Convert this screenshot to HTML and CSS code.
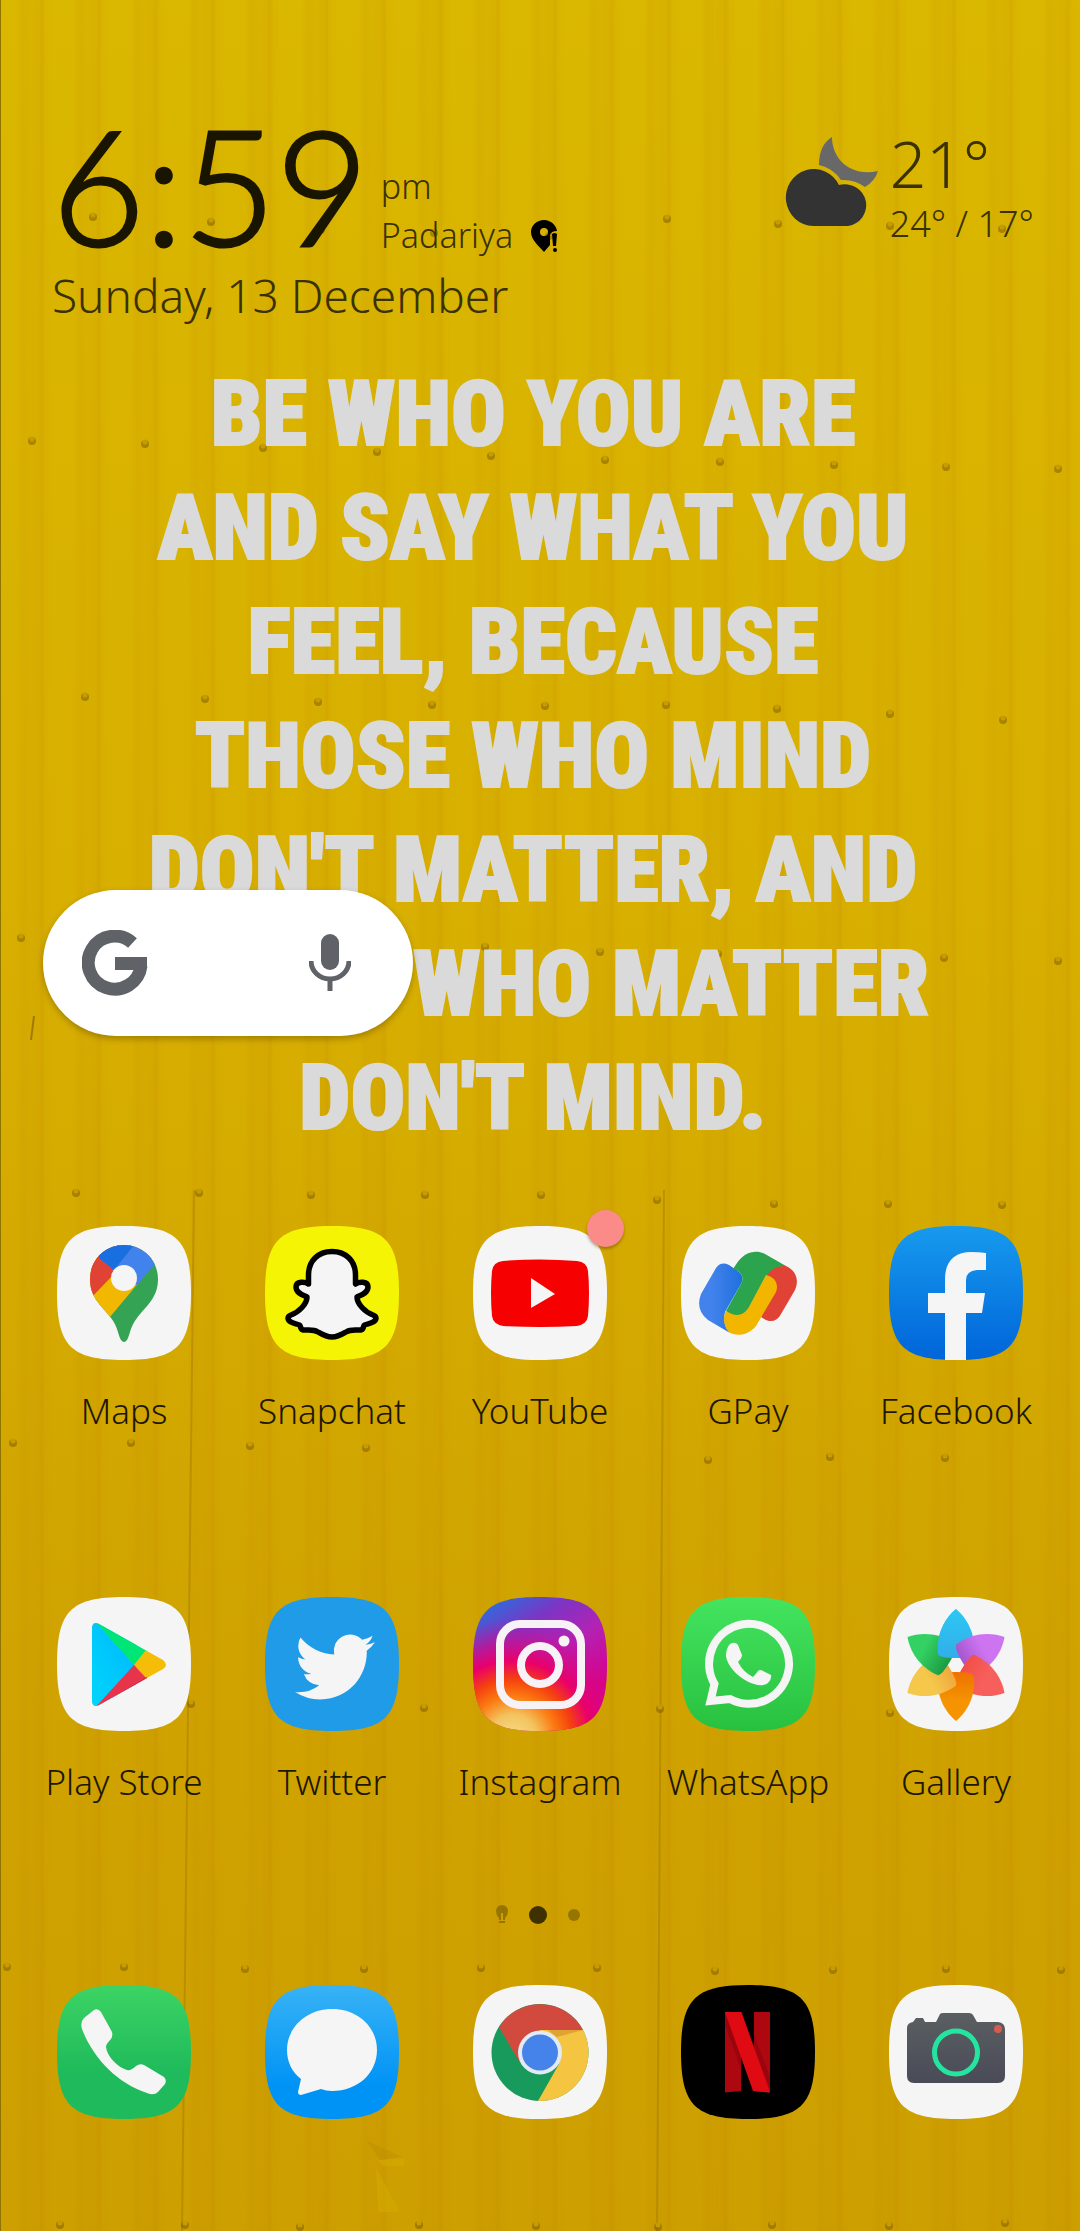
FILE: index.html
```
<!DOCTYPE html>
<html lang="en">
<head>
<meta charset="utf-8">
<meta name="viewport" content="width=device-width">
<title>Home</title>
<link rel="stylesheet" href="styles.css">
</head>
<body>
<svg class="wallpaper" viewBox="0 0 1080 2231" preserveAspectRatio="xMidYMid slice" aria-hidden="true">
  <defs>
    <linearGradient id="paint" x1="0" y1="0" x2="0" y2="1">
      <stop offset="0" stop-color="#dab700"/><stop offset=".4" stop-color="#d8b000"/><stop offset=".75" stop-color="#d0a300"/><stop offset="1" stop-color="#cd9f00"/>
    </linearGradient>
    <linearGradient id="rib">
      <stop offset="0" stop-color="#b87800" stop-opacity=".04"/><stop offset=".15" stop-color="#b87800" stop-opacity="0"/><stop offset=".5" stop-color="#b87800" stop-opacity="0"/><stop offset=".62" stop-color="#b87800" stop-opacity=".1"/><stop offset=".75" stop-color="#b87800" stop-opacity=".05"/><stop offset=".88" stop-color="#b87800" stop-opacity=".08"/><stop offset=".95" stop-color="#b47000" stop-opacity=".16"/><stop offset="1" stop-color="#b87800" stop-opacity=".04"/>
    </linearGradient>
    <pattern id="ribs" width="57" height="2231" patternUnits="userSpaceOnUse" x="-12"><rect width="57" height="2231" fill="url(#rib)"/></pattern>
    <g id="rivet"><circle r="4" fill="#7a5800" opacity=".5"/><circle cy="-2" r="2.500" fill="#c79c00"/></g>
  </defs>
  <rect width="1080" height="2231" fill="url(#paint)"/>
  <rect width="1080" height="2231" fill="url(#ribs)"/>
  <path d="M0 0V2231" stroke="#8f7500" stroke-width="2"/>
  <path d="M194 1190L182 2231M664 1190L657 2231" stroke="#8a6200" stroke-width="2" opacity=".3" fill="none"/>
  <path d="M31 1040L34 1016" stroke="#6a4c00" stroke-width="2" opacity=".5"/>
  <path d="M366 2140L402 2157L380 2160Z" fill="#b98c00" opacity=".4"/><path d="M378 2160L405 2158L404 2166L382 2166ZM376 2168L400 2212L378 2212Z" fill="#d6ac00" opacity=".5"/>
  <use href="#rivet" x="93" y="217"/><use href="#rivet" x="211" y="222"/><use href="#rivet" x="321" y="230"/><use href="#rivet" x="434" y="233"/><use href="#rivet" x="549" y="236"/><use href="#rivet" x="667" y="219"/><use href="#rivet" x="778" y="224"/><use href="#rivet" x="890" y="226"/><use href="#rivet" x="1002" y="229"/>
  <use href="#rivet" x="32" y="441"/><use href="#rivet" x="145" y="444"/><use href="#rivet" x="263" y="448"/><use href="#rivet" x="377" y="452"/><use href="#rivet" x="491" y="456"/><use href="#rivet" x="605" y="460"/><use href="#rivet" x="720" y="462"/><use href="#rivet" x="834" y="465"/><use href="#rivet" x="946" y="467"/><use href="#rivet" x="1058" y="469"/>
  <use href="#rivet" x="85" y="697"/><use href="#rivet" x="205" y="699"/><use href="#rivet" x="318" y="702"/><use href="#rivet" x="432" y="705"/><use href="#rivet" x="545" y="706"/><use href="#rivet" x="666" y="705"/><use href="#rivet" x="777" y="709"/><use href="#rivet" x="890" y="714"/><use href="#rivet" x="1003" y="720"/>
  <use href="#rivet" x="21" y="938"/><use href="#rivet" x="485" y="947"/><use href="#rivet" x="600" y="952"/><use href="#rivet" x="718" y="954"/><use href="#rivet" x="944" y="958"/><use href="#rivet" x="1058" y="961"/>
  <use href="#rivet" x="76" y="1193"/><use href="#rivet" x="199" y="1193"/><use href="#rivet" x="311" y="1195"/><use href="#rivet" x="425" y="1195"/><use href="#rivet" x="541" y="1195"/><use href="#rivet" x="657" y="1200"/><use href="#rivet" x="774" y="1204"/><use href="#rivet" x="888" y="1204"/><use href="#rivet" x="1002" y="1205"/>
  <use href="#rivet" x="13" y="1443"/><use href="#rivet" x="131" y="1443"/><use href="#rivet" x="250" y="1446"/><use href="#rivet" x="366" y="1448"/><use href="#rivet" x="708" y="1460"/><use href="#rivet" x="830" y="1457"/><use href="#rivet" x="945" y="1458"/>
  <use href="#rivet" x="191" y="1704"/><use href="#rivet" x="424" y="1708"/><use href="#rivet" x="660" y="1709"/><use href="#rivet" x="890" y="1713"/>
  <use href="#rivet" x="7" y="1967"/><use href="#rivet" x="124" y="1967"/><use href="#rivet" x="245" y="1969"/><use href="#rivet" x="364" y="1969"/><use href="#rivet" x="481" y="1968"/><use href="#rivet" x="597" y="1968"/><use href="#rivet" x="715" y="1971"/><use href="#rivet" x="833" y="1970"/><use href="#rivet" x="946" y="1969"/><use href="#rivet" x="1061" y="1970"/>
  <use href="#rivet" x="60" y="2225"/><use href="#rivet" x="185" y="2225"/><use href="#rivet" x="300" y="2227"/><use href="#rivet" x="419" y="2225"/><use href="#rivet" x="536" y="2226"/><use href="#rivet" x="658" y="2227"/><use href="#rivet" x="772" y="2225"/><use href="#rivet" x="889" y="2226"/><use href="#rivet" x="1005" y="2223"/>
</svg>
<svg class="defs" aria-hidden="true">
  <defs>
    <path id="tile" d="M67 0C120 0 134 14 134 67S120 134 67 134 0 120 0 67 14 0 67 0Z"/>
  </defs>
</svg>

<main class="home">
  <header class="status">
    <section class="when">
      <div class="when-top">
        <time class="clock">6:59</time>
        <div class="place">
          <span>pm</span>
          <span class="town">Padariya
            <svg class="pin" viewBox="0 0 26 32" aria-hidden="true"><path fill-rule="evenodd" d="M13 0C6 0 0 5 0 12C0 20 8 26 13 32L19 25V15Q20 11 26 11C25 5 20 0 13 0ZM13 8A4 4 0 1 1 13 16A4 4 0 1 1 13 8Z"/><path d="M21 14Q24 12 26 14L25 26H22Z"/><circle cx="24" cy="30" r="2"/></svg>
          </span>
        </div>
      </div>
      <p class="date">Sunday, 13 December</p>
    </section>
    <section class="weather">
      <svg class="sky" viewBox="0 0 93 89" aria-hidden="true"><path fill="#686868" d="M47 0C47 22 65 40 93 34Q90 44 80 50Q69 42 56 43Q48 31 34 28Q34 8 47 0Z"/><path fill="#333" d="M28 89A28 28.500 0 1 1 54 48A21.500 21 0 1 1 63 89Z"/></svg>
      <div class="temps"><span class="now">21°</span><span>24° / 17°</span></div>
    </section>
  </header>

  <section class="stage">
    <p class="quote">BE WHO YOU ARE<br>AND SAY WHAT YOU<br>FEEL, BECAUSE<br>THOSE WHO MIND<br>DON'T MATTER, AND<br>THOSE WHO MATTER<br>DON'T MIND.</p>
    <div class="search">
      <button aria-label="Search"><svg class="g" viewBox="-33 -33 66 66"><path d="M17.500 -20A26.500 26.500 0 1 0 26 3" fill="none" stroke="currentColor" stroke-width="13"/><path d="M0 -6H32V4L28 7H0Z" fill="currentColor"/></svg></button>
      <button aria-label="Voice search"><svg class="mic" viewBox="0 0 42 58"><rect x="12" width="18" height="36" rx="9" fill="currentColor"/><path d="M2 27A19 18 0 0 0 40 27M21 44V57" fill="none" stroke="currentColor" stroke-width="5"/></svg></button>
    </div>
  </section>

  <nav class="apps" aria-label="Apps">
    <a class="app" href="#maps">
      <svg viewBox="0 0 134 134"><use href="#tile" fill="#f5f5f5"/><clipPath id="mp"><path d="M67 19C48 19 33 34 33 53C33 72 45 80 54 92C61 101 61 109 64 114Q67 118 70 114C73 109 73 101 80 92C89 80 101 72 101 53C101 34 86 19 67 19Z"/></clipPath><g clip-path="url(#mp)"><rect width="134" height="134" fill="#34a353"/><path d="M98 37L53 91L30 75V10H98Z" fill="#f2b700"/><path d="M57 48L34 72H20V10H60Z" fill="#e04335"/><path d="M42 32L57 44L80 59L104 31L80 10H50Z" fill="#4282ec"/><path d="M42 32L57 44L78 18L67 10H40Z" fill="#1a6fe0"/></g><circle cx="67" cy="52" r="13" fill="#f5f5f5"/></svg>
      <span>Maps</span></a>
    <a class="app" href="#snapchat">
      <svg viewBox="0 0 134 134"><use href="#tile" fill="#f5f405"/><path d="M67 25.500C53 25.500 43.500 35 43.500 49V58C40 55.500 31 55 31 61C31 67 38 69 42 71C42 78 34 86 26 89C22 90.500 22 94 26 96C29 98 33 98 34.500 99C36 100 35 103 38 104C43 104.500 48 103 53 106C58 109 61 111 67 111C73 111 76 109 81 106C86 103 91 104.500 96 104C99 103 98 100 99.500 99C101 98 105 98 108 96C112 94 112 90.500 108 89C100 86 92 78 92 71C96 69 103 67 103 61C103 55 94 55.500 90.500 58V49C90.500 35 81 25.500 67 25.500Z" fill="#f5f5f5" stroke="#000" stroke-width="5.500" stroke-linejoin="round"/></svg>
      <span>Snapchat</span></a>
    <a class="app" href="#youtube">
      <svg viewBox="0 0 134 134"><use href="#tile" fill="#f5f5f5"/><path d="M30 35Q67 32 104 35Q114 36 115 45Q117 67 115 90Q114 98 104 100Q67 102 30 100Q20 98 19 90Q17 67 19 45Q20 36 30 35Z" fill="#f60002"/><path d="M58 52L82 68L58 82Z" fill="#f5f5f5"/></svg>
      <i class="badge"></i><span>YouTube</span></a>
    <a class="app" href="#gpay">
      <svg viewBox="0 0 134 134"><use href="#tile" fill="#f5f5f5"/><linearGradient id="gb"><stop offset=".3" stop-color="#4282ec"/><stop offset="1" stop-color="#1e70dd"/></linearGradient><path d="M105 40C116 45 118 55 114 64L100 88Q96 96 88 95Q84 94 80 91L93 62L85 49C90 41 98 39 105 40Z" fill="#e04335"/><path d="M35 42Q40 35 48 39L57 45Q64 50 60 58L44 86C42 95 44 102 49 107L27 94Q14 84 20 68Z" fill="url(#gb)"/><path d="M52 43L56 37C63 26 75 23 84 28L105 40C96 40 90 43 85 50L68 82Q62 92 52 90L45 85L60 58Q64 50 57 45Z" fill="#2ca44e"/><path d="M85 49C94 51 98 58 95 66L75 100C66 111 54 110 48 106C42 100 42 90 45 85C56 92 63 89 68 81Z" fill="#f3b600"/></svg>
      <span>GPay</span></a>
    <a class="app" href="#facebook">
      <svg viewBox="0 0 134 134"><linearGradient id="fb" x2="0" y2="1"><stop stop-color="#179aee"/><stop offset="1" stop-color="#0065d9"/></linearGradient><use href="#tile" fill="url(#fb)"/><path d="M56 134V87H39V67H56V53C56 35 66 26 82 26Q90 26 97 27V44H88Q77 45 77 54V67H96L93 87H77V134Z" fill="#f5f5f5"/></svg>
      <span>Facebook</span></a>
    <a class="app" href="#play">
      <svg viewBox="0 0 134 134"><linearGradient id="pb" x1="1" x2="0" y2="1"><stop stop-color="#00b5ff"/><stop offset="1" stop-color="#00d9fa"/></linearGradient><use href="#tile" fill="#f5f5f5"/><clipPath id="pp"><path d="M35 30Q36 24 42 27L106 63Q112 68 106 72L42 108Q36 111 35 105Z"/></clipPath><g clip-path="url(#pp)"><rect x="30" y="20" width="50" height="95" fill="url(#pb)"/><path d="M36 22L77 68L94 50L50 20Z" fill="#00e676"/><path d="M77 68L89 53L115 60V76L89 82Z" fill="#f6bd08"/><path d="M36 113L77 68L90 82L45 115Z" fill="#e8344a"/><path d="M38 111L90 80V84L42 112Z" fill="#b82b48"/></g></svg>
      <span>Play Store</span></a>
    <a class="app" href="#twitter">
      <svg viewBox="0 0 134 134"><use href="#tile" fill="#1f9be8"/><path transform="translate(30 30) scale(3.330)" d="M23.953 4.570a10 10 0 01-2.825.775 4.958 4.958 0 002.163-2.723c-.951.555-2.005.959-3.127 1.184a4.920 4.920 0 00-8.384 4.482C7.690 8.095 4.067 6.130 1.640 3.162a4.822 4.822 0 00-.666 2.475c0 1.710.870 3.213 2.188 4.096a4.904 4.904 0 01-2.228-.616v.060a4.923 4.923 0 003.946 4.827 4.996 4.996 0 01-2.212.085 4.936 4.936 0 004.604 3.417 9.867 9.867 0 01-6.102 2.105c-.390 0-.779-.023-1.170-.067a13.995 13.995 0 007.557 2.209c9.053 0 13.998-7.496 13.998-13.985 0-.210 0-.420-.015-.630A9.935 9.935 0 0024 4.590z" fill="#f5f5f5"/></svg>
      <span>Twitter</span></a>
    <a class="app" href="#instagram">
      <svg viewBox="0 0 134 134"><linearGradient id="ia" x1=".2" y1="0" x2=".7" y2=".8"><stop stop-color="#2f6bdc"/><stop offset=".3" stop-color="#7d34c4"/><stop offset=".6" stop-color="#b322b4"/><stop offset="1" stop-color="#d8008c"/></linearGradient><radialGradient id="ib" gradientUnits="userSpaceOnUse" cx="40" cy="142" r="120"><stop stop-color="#f6df88"/><stop offset=".2" stop-color="#f3c460"/><stop offset=".36" stop-color="#fb7a10"/><stop offset=".5" stop-color="#f5400f"/><stop offset=".65" stop-color="#e9006a"/><stop offset="1" stop-color="#c8109a" stop-opacity="0"/></radialGradient><use href="#tile" fill="url(#ia)"/><use href="#tile" fill="url(#ib)"/><g fill="none" stroke="#f7f2f6" stroke-width="8"><rect x="27" y="27" width="81" height="81" rx="20"/><circle cx="67" cy="68" r="19"/></g><circle cx="91" cy="44" r="5.500" fill="#f7f2f6"/></svg>
      <span>Instagram</span></a>
    <a class="app" href="#whatsapp">
      <svg viewBox="0 0 134 134"><linearGradient id="wa" x2="0" y2="1"><stop stop-color="#44e45f"/><stop offset="1" stop-color="#28c13f"/></linearGradient><use href="#tile" fill="url(#wa)"/><path d="M29.500 104L33.500 87A40 40 0 1 1 49 102Z" fill="none" stroke="#f5f5f5" stroke-width="8"/><path d="M49 47Q54 44 57 48L61 58Q61 61 57 65Q62 75 72 80Q75 77 77 74Q79 72 82 74L90 78Q91 82 87 86Q82 90 73 87C57 82 46 68 45 59Q45 51 49 47Z" fill="#f5f5f5"/></svg>
      <span>WhatsApp</span></a>
    <a class="app" href="#gallery">
      <svg viewBox="0 0 134 134"><defs><path id="petal" d="M67 12C56 21 47 37 49 57Q50 61 67 61Q84 61 85 57C87 37 78 21 67 12Z"/><clipPath id="lh"><path d="M0 0H67V67H0Z"/></clipPath><linearGradient id="p1" x2="0" y2="1"><stop stop-color="#2cc8f3"/><stop offset="1" stop-color="#32aee8"/></linearGradient><linearGradient id="p2" x2="0" y2="1"><stop offset=".5" stop-color="#cd74f0"/><stop offset="1" stop-color="#a456cf"/></linearGradient><linearGradient id="p3" x2="0" y2="1"><stop offset=".5" stop-color="#f65f5c"/><stop offset="1" stop-color="#f24e48"/></linearGradient><linearGradient id="p4" x2="0" y2="1"><stop offset=".4" stop-color="#f59400"/><stop offset="1" stop-color="#ef7100"/></linearGradient><linearGradient id="p5" x2="0" y2="1"><stop offset=".5" stop-color="#f5c84c"/><stop offset="1" stop-color="#f0a83e"/></linearGradient><linearGradient id="p6" x2="0" y2="1"><stop offset=".4" stop-color="#33d163"/><stop offset="1" stop-color="#1c9a42"/></linearGradient></defs><use href="#tile" fill="#f5f5f5"/><use href="#petal" fill="url(#p1)"/><use href="#petal" fill="url(#p2)" transform="rotate(60 67 68)"/><use href="#petal" fill="url(#p3)" transform="rotate(120 67 68)"/><use href="#petal" fill="url(#p4)" transform="rotate(180 67 68)"/><use href="#petal" fill="url(#p5)" transform="rotate(240 67 68)"/><use href="#petal" fill="url(#p6)" transform="rotate(300 67 68)"/><g clip-path="url(#lh)"><use href="#petal" fill="url(#p1)"/></g></svg>
      <span>Gallery</span></a>
  </nav>

  <div class="pages" aria-hidden="true">
    <svg class="bulb" viewBox="0 0 12 20"><path d="M3 13Q0 10 0 6A6 6 0 0 1 12 6Q12 10 9 13V15H7V8H5V15H3ZM3 16H9V18H3Z" fill="currentColor"/></svg>
    <i class="dot current"></i><i class="dot"></i>
  </div>

  <nav class="dock" aria-label="Dock">
    <a class="app" href="#phone" aria-label="Phone"><svg viewBox="0 0 134 134"><linearGradient id="ph" x2="0" y2="1"><stop stop-color="#3dd464"/><stop offset=".65" stop-color="#1fba5b"/></linearGradient><use href="#tile" fill="url(#ph)"/><path d="M37 25Q41 23 44 27L55 47Q56 51 54 54Q49 59 49 62C50 71 60 82 70 85Q74 86 79 81Q83 78 87 80L107 92Q110 95 108 99L101 107Q97 111 90 108C60 98 36 73 25 44Q23 37 27 33Z" fill="#f5f5f5"/></svg></a>
    <a class="app" href="#messages" aria-label="Messages"><svg viewBox="0 0 134 134"><linearGradient id="ms" x2="0" y2="1"><stop stop-color="#38b3f5"/><stop offset=".75" stop-color="#0093f6"/></linearGradient><use href="#tile" fill="url(#ms)"/><path d="M67 24C93 24 112 42 112 65S93 106 67 106Q61 106 56 104L36 110Q33 110 33 107L36 94C27 87 22 77 22 65C22 42 42 24 67 24Z" fill="#f5f5f5"/></svg></a>
    <a class="app" href="#chrome" aria-label="Chrome"><svg viewBox="0 0 134 134"><use href="#tile" fill="#f5f5f5"/><circle cx="67" cy="67.500" r="48.500" fill="#179a5b"/><path d="M67 45H110A48.500 48.500 0 0 1 65 116L86 79Z" fill="#f5c440"/><path d="M67 45H110A48.500 48.500 0 0 0 26 42L47 78Z" fill="#d24a3e"/><path d="M75 45H110L84 52Z" fill="#dfa235"/><circle cx="67" cy="67.500" r="22" fill="#e3eaf4"/><circle cx="67" cy="67.500" r="18" fill="#4583ea"/></svg></a>
    <a class="app" href="#netflix" aria-label="Netflix"><svg viewBox="0 0 134 134"><use href="#tile"/><path d="M44 27H60V106L44 107.500ZM73 27H89V107.500L73 106Z" fill="#ad0710"/><path d="M44 27L60 70V84L44 40ZM73 50V64L89 104V92Z" fill="#7d0007" opacity=".4"/><path d="M44 27H60.500L89 107.500L72 106Z" fill="#e00a13"/></svg></a>
    <a class="app" href="#camera" aria-label="Camera"><svg viewBox="0 0 134 134"><linearGradient id="cm" x2="0" y2="1"><stop stop-color="#5a5f62"/><stop offset="1" stop-color="#494b57"/></linearGradient><use href="#tile" fill="#f5f5f5"/><path d="M18 43Q18 38 24 37L27 33H34L36 37H47L51 29Q52 28 54 28H80Q83 28 84 30L88 37H109Q116 38 116 44V91Q116 98 109 98H25Q18 98 18 91Z" fill="url(#cm)"/><circle cx="67" cy="67.500" r="21.500" fill="none" stroke="#23e5a0" stroke-width="5"/><circle cx="109" cy="44" r="4" fill="#d65a50"/></svg></a>
  </nav>
</main>
</body>
</html>
```
FILE: styles.css
```
* { box-sizing: border-box; }
body {
  margin: 0;
  background: #d3a900;
  font-family: "Noto Sans", "Open Sans", sans-serif;
  font-weight: 300;
  font-size: 35px;
  line-height: 49px;
  color: #1e1700;
}
p { margin: 0; }
svg { display: block; }
a { color: inherit; text-decoration: none; }
.defs { position: absolute; width: 0; height: 0; }
.wallpaper { position: absolute; inset: 0; width: 100%; height: 100%; z-index: -1; }
.home { position: relative; padding-bottom: 110px; }

.status { display: flex; justify-content: space-between; align-items: flex-start; padding: 108px 46px 0 52px; color: #3a3100; }
.when-top { display: flex; align-items: flex-end; gap: 12px; }
.clock { font-family: Lato, sans-serif; font-size: 160px; line-height: 152px; color: #191500; -webkit-text-stroke: 3px #191500; }
.place { display: flex; flex-direction: column; font-size: 34px; }
.town { display: flex; align-items: center; gap: 18px; }
.pin { width: 26px; height: 32px; fill: #000; }
.date { font-size: 46px; line-height: 70px; }
.weather { display: flex; gap: 12px; padding-top: 21px; }
.sky { width: 93px; height: 89px; margin-top: 8px; }
.temps { display: flex; flex-direction: column; font-size: 36px; }
.now { font-size: 64px; line-height: 70px; }

.stage { display: grid; }
.stage > * { grid-area: 1 / 1; }
.quote {
  padding: 27px 14px 0 0;
  font-family: "Roboto Condensed", Roboto, sans-serif;
  font-weight: 900;
  font-size: 91px;
  line-height: 114px;
  text-align: center;
  color: #dadada;
  -webkit-text-stroke: 2px #dadada;
}
.search {
  display: flex;
  align-items: center;
  justify-content: space-between;
  justify-self: start;
  width: 370px;
  height: 146px;
  margin: 560px 0 0 43px;
  padding: 0 62px 0 39px;
  border-radius: 73px;
  background: #fff;
  box-shadow: 0 3px 6px rgba(70, 50, 0, .35);
}
.search button { padding: 0; border: 0; background: none; color: #5f6368; }
.g { width: 66px; height: 66px; }
.mic { width: 42px; height: 58px; }

.apps, .dock { display: grid; grid-template-columns: repeat(5, 1fr); padding: 0 20px; }
.apps { row-gap: 162px; margin-top: 71px; }
.app { position: relative; display: flex; flex-direction: column; align-items: center; gap: 26px; white-space: nowrap; }
.app svg { width: 134px; height: 134px; }
.badge { position: absolute; top: -16px; left: 50%; width: 37px; height: 37px; margin-left: 47px; border-radius: 50%; background: #fa8b88; box-shadow: 0 2px 3px rgba(70, 50, 0, .4); }

.pages { display: flex; justify-content: center; align-items: center; gap: 21px; height: 24px; margin-top: 97px; padding-right: 4px; color: #957500; }
.bulb { width: 12px; height: 20px; }
.dot { width: 12px; height: 12px; border-radius: 50%; background: currentColor; }
.current { width: 18px; height: 18px; background: #3f3000; }
.dock { margin-top: 58px; }
```
